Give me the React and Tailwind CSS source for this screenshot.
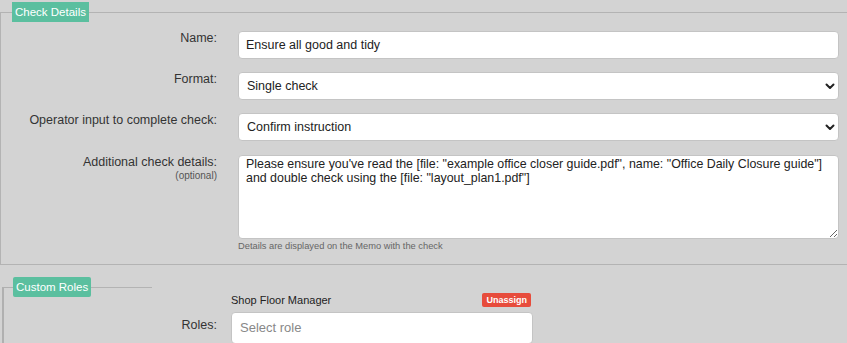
import React from "react";

const Chevron = () => (
  <svg width="10" height="7" viewBox="0 0 10 7" className="pointer-events-none">
    <path d="M1.5 1.5 L5 5 L8.5 1.5" fill="none" stroke="#222" strokeWidth="2" strokeLinecap="round" strokeLinejoin="round" />
  </svg>
);

function Row({ label, sub, children, className = "" }) {
  return (
    <div className={"flex items-start " + className}>
      <div className="w-[216px] shrink-0 text-right">
        <div className="text-[12.5px] leading-[15px] text-[#333]">{label}</div>
        {sub && <div className="text-[10px] leading-[11px] text-[#555]">{sub}</div>}
      </div>
      <div className="ml-[21px] flex-1 mr-[8px]">{children}</div>
    </div>
  );
}

function SelectBox({ value }) {
  return (
    <div className="flex items-center justify-between h-[28px] bg-white border border-[#c4c4c4] rounded-[4px] pl-[8px] pr-[3px]">
      <span className="text-[12.5px] text-[#222]">{value}</span>
      <Chevron />
    </div>
  );
}

export default function App() {
  return (
    <div className="w-[847px] h-[343px] overflow-hidden bg-[#d3d3d3] font-['Liberation_Sans',Arial,sans-serif]">
      {/* Section 1 */}
      <div className="pt-[2px]">
        <div className="flex h-[20px]">
          <div className="w-[12px] mt-[10px] h-[10px] border-t border-l border-[#b3b3b3]" />
          <div className="bg-[#5bbf9f] text-white text-[11.5px] leading-[20px] px-[3px] h-[20px]">Check Details</div>
          <div className="flex-1 mt-[10px] border-t border-[#b3b3b3]" />
        </div>
        <div className="border-l border-b border-[#b3b3b3] pt-[9px] pb-[12px]">
          <Row label="Name:">
            <div className="flex items-center h-[28px] bg-white border border-[#c4c4c4] rounded-[4px] pl-[7px] text-[12.5px] text-[#222]">
              Ensure all good and tidy
            </div>
          </Row>
          <Row label="Format:" className="mt-[13px]">
            <SelectBox value="Single check" />
          </Row>
          <Row label="Operator input to complete check:" className="mt-[13px]">
            <SelectBox value="Confirm instruction" />
          </Row>
          <Row label="Additional check details:" sub="(optional)" className="mt-[14px]">
            <textarea
              readOnly
              className="block w-full h-[84px] bg-white border border-[#c4c4c4] rounded-[4px] px-[7px] py-[1px] text-[12.4px] leading-[14px] text-[#222] resize-y outline-none"
              value={'Please ensure you\'ve read the [file: "example office closer guide.pdf", name: "Office Daily Closure guide"] and double check using the [file: "layout_plan1.pdf"]'}
            />
            <div className="text-[9.3px] leading-[11px] text-[#666] mt-[2px]">Details are displayed on the Memo with the check</div>
          </Row>
        </div>
      </div>

      {/* Section 2 */}
      <div className="mt-[12px]">
        <div className="flex h-[20px]">
          <div className="ml-[2px] w-[11px] mt-[10px] h-[10px] border-t border-l-2 border-[#b0b0b0]" />
          <div className="bg-[#5bbf9f] text-white text-[11.5px] leading-[20px] px-[3px] h-[20px] rounded-[2px]">Custom Roles</div>
          <div className="w-[61px] mt-[10px] border-t border-[#b3b3b3]" />
        </div>
        <div className="ml-[2px] border-l-2 border-[#b0b0b0] h-[60px]">
          <div className="flex">
            <div className="w-[213px] shrink-0" />
            <div className="ml-[14px] w-[302px]">
              <div className="flex items-center justify-between h-[16px] mt-[-5px]">
                <span className="text-[11px] text-[#222]">Shop Floor Manager</span>
                <span className="bg-[#e74c3c] text-white text-[9px] font-bold leading-[14px] px-[4px] rounded-[2px] mr-[2px]">Unassign</span>
              </div>
            </div>
          </div>
          <div className="flex items-start mt-[4px]">
            <div className="w-[213px] shrink-0 text-right text-[12.5px] text-[#333] pt-[4px]">Roles:</div>
            <div className="ml-[14px] w-[302px] h-[32px] bg-white border border-[#c4c4c4] rounded-[4px] flex items-center pl-[8px] text-[13px] text-[#888]">
              Select role
            </div>
          </div>
        </div>
      </div>
    </div>
  );
}
